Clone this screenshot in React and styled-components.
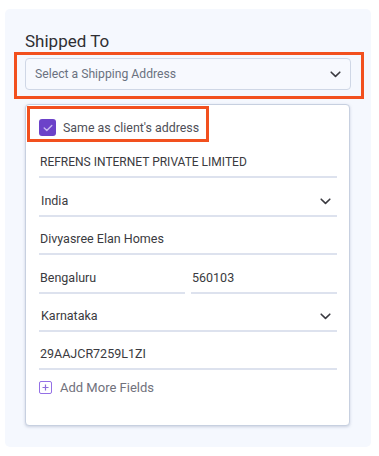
import React from "react";
import styled, { createGlobalStyle } from "styled-components";

const Global = createGlobalStyle`
  html, body { margin: 0; padding: 0; background: #ffffff; }
  body { font-family: Roboto, "Noto Sans", sans-serif; -webkit-font-smoothing: antialiased; }
  * { box-sizing: border-box; }
`;

const Panel = styled.div`
  margin: 9px 8px 0 5px;
  width: 366px;
  height: 438px;
  background: #f5f8fe;
  border-radius: 5px;
  padding: 22px 20px 0 20px;
`;

const Title = styled.div`
  display: inline-block;
  font-size: 17px;
  line-height: 20px;
  color: #2f2f33;
  padding-bottom: 1px;
  border-bottom: 1px dashed #b9bcc4;
`;

const Highlight = styled.div`
  position: relative;
  width: ${p => (p.$fit ? "fit-content" : "auto")};
  &::after {
    content: "";
    position: absolute;
    top: ${p => p.$t}px;
    left: ${p => p.$l}px;
    right: ${p => p.$r}px;
    bottom: ${p => p.$b}px;
    border: 3px solid #f2501e;
    pointer-events: none;
  }
`;

const SelectBox = styled.div`
  margin-top: 5px;
  height: 32px;
  width: 326px;
  border: 1px solid #cfd7e6;
  border-radius: 4px;
  background: #f7f9fe;
  display: flex;
  align-items: center;
  justify-content: space-between;
  padding: 0 9px 0 9px;
  font-size: 12.2px;
  color: #6b7280;
`;

const Card = styled.div`
  margin-top: 14px;
  width: 325px;
  height: 322px;
  background: #ffffff;
  border: 1px solid #c7d0e0;
  border-radius: 4px;
  box-shadow: 0 1px 3px rgba(120, 135, 165, 0.35);
  padding: 14px 12px 0 13px;
`;

const CheckRow = styled.div`
  display: flex;
  align-items: center;
  gap: 7px;
  height: 17px;
  font-size: 12.4px;
  color: #4f4f58;
  white-space: nowrap;
`;

const CheckBox = styled.span`
  width: 17px;
  height: 17px;
  border-radius: 3px;
  background: #6c42c9;
  display: flex;
  align-items: center;
  justify-content: center;
  flex-shrink: 0;
`;

const Fields = styled.div`
  margin-top: 4px;
  display: flex;
  flex-direction: column;
`;

const Row = styled.div`
  display: flex;
  gap: 6px;
  & > * { flex: 1 1 0; }
`;

const Field = styled.div`
  height: 38.4px;
  flex-shrink: 0;
  border-bottom: 2px solid #dde2ee;
  display: flex;
  align-items: flex-end;
  justify-content: space-between;
  padding: 0 ${p => (p.$select ? "6px" : "0")} 6px ${p => (p.$select ? "2px" : "1px")};
  font-size: ${p => (p.$caps ? "12px" : "12.5px")};
  line-height: 16px;
  color: #3a3a40;
  white-space: nowrap;
`;

const Chevron = styled.svg`
  width: 11px;
  height: 7px;
  margin-bottom: ${p => p.$mb || 0}px;
`;

const AddRow = styled.div`
  margin-top: 10px;
  display: flex;
  align-items: center;
  gap: 8px;
  font-size: 13px;
  color: #71717c;
`;

const PlusBox = styled.span`
  width: 13px;
  height: 13px;
  border: 1.5px solid #9470e6;
  border-radius: 2px;
  display: flex;
  align-items: center;
  justify-content: center;
`;

const ChevronIcon = ({ mb }) => (
  <Chevron viewBox="0 0 11 7" $mb={mb}>
    <path d="M1.2 1.2 L5.5 5.4 L9.8 1.2" fill="none" stroke="#3a3a40" strokeWidth="1.6" strokeLinecap="round" strokeLinejoin="round" />
  </Chevron>
);

export default function App() {
  return (
    <>
      <Global />
      <Panel>
        <Title>Shipped To</Title>
        <Highlight $t={-6} $l={-11} $r={-13} $b={-9}>
          <SelectBox>
            <span>Select a Shipping Address</span>
            <ChevronIcon />
          </SelectBox>
        </Highlight>
        <Card>
          <Highlight $fit $t={-13} $l={-12} $r={-10} $b={-6}>
            <CheckRow>
              <CheckBox>
                <svg width="10" height="8" viewBox="0 0 10 8">
                  <path d="M1.2 4 L3.8 6.4 L8.8 1.4" fill="none" stroke="#c9b8f0" strokeWidth="1.4" strokeLinecap="round" strokeLinejoin="round" />
                </svg>
              </CheckBox>
              <span>Same as client's address</span>
            </CheckRow>
          </Highlight>
          <Fields>
            <Field $caps>REFRENS INTERNET PRIVATE LIMITED</Field>
            <Field $select>
              <span>India</span>
              <ChevronIcon mb={4} />
            </Field>
            <Field>Divyasree Elan Homes</Field>
            <Row>
              <Field>Bengaluru</Field>
              <Field>560103</Field>
            </Row>
            <Field $select>
              <span>Karnataka</span>
              <ChevronIcon mb={4} />
            </Field>
            <Field>29AAJCR7259L1ZI</Field>
          </Fields>
          <AddRow>
            <PlusBox>
              <svg width="7" height="7" viewBox="0 0 7 7">
                <path d="M3.5 0.5 V6.5 M0.5 3.5 H6.5" stroke="#8e6ddb" strokeWidth="1.2" />
              </svg>
            </PlusBox>
            <span>Add More Fields</span>
          </AddRow>
        </Card>
      </Panel>
    </>
  );
}
